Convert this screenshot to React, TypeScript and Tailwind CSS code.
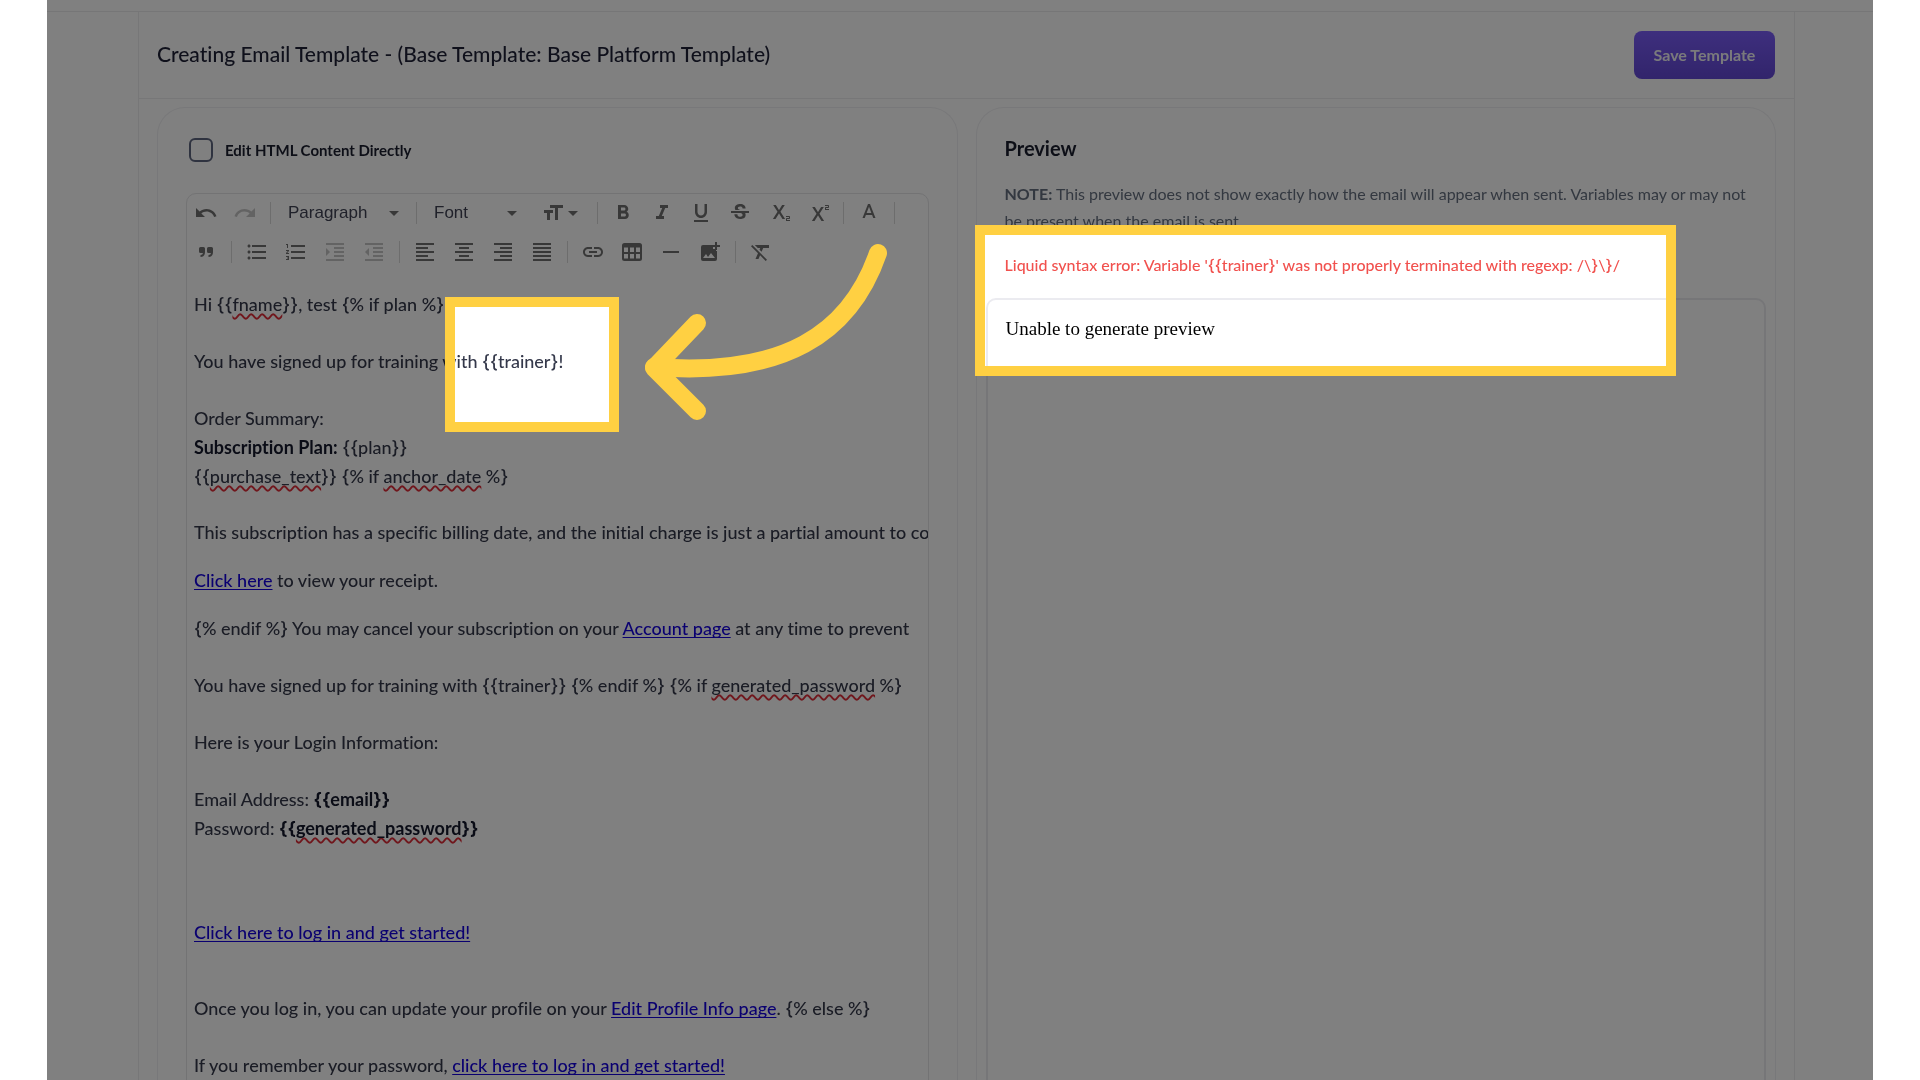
import type { ComponentType, ReactNode } from 'react';
import {
  MdUndo,
  MdRedo,
  MdArrowDropDown,
  MdFormatSize,
  MdFormatBold,
  MdFormatItalic,
  MdFormatUnderlined,
  MdStrikethroughS,
  MdSubscript,
  MdSuperscript,
  MdFormatListBulleted,
  MdFormatListNumbered,
  MdFormatIndentIncrease,
  MdFormatIndentDecrease,
  MdFormatAlignLeft,
  MdFormatAlignCenter,
  MdFormatAlignRight,
  MdFormatAlignJustify,
  MdLink,
  MdHorizontalRule,
  MdFormatClear,
} from 'react-icons/md';

type IconType = ComponentType<{ className?: string }>;

const TextColorIcon: IconType = ({ className }) => (
  <svg viewBox="0 0 24 24" fill="currentColor" className={className}>
    <path d="M11 3 5.5 17h2.25l1.12-3h6.25l1.12 3h2.25L13 3h-2zm-1.38 9L12 5.67 14.38 12H9.62z" />
  </svg>
);

const QuoteIcon: IconType = ({ className }) => (
  <svg viewBox="0 0 24 24" fill="currentColor" className={className}>
    <path d="M5 8.500A1.500 1.500 0 0 1 6.500 7h3A1.500 1.500 0 0 1 11 8.500V12c0 3-1.500 5-4.500 5v-2c1.500 0 2.300-.8 2.400-2H6.500A1.500 1.500 0 0 1 5 11.500z" />
    <path d="M13 8.500A1.500 1.500 0 0 1 14.500 7h3A1.500 1.500 0 0 1 19 8.500V12c0 3-1.500 5-4.500 5v-2c1.500 0 2.300-.8 2.400-2h-2.400a1.500 1.500 0 0 1-1.500-1.500z" />
  </svg>
);

const TableIcon: IconType = ({ className }) => (
  <svg viewBox="0 0 24 24" fill="currentColor" className={className}>
    <path
      fillRule="evenodd"
      d="M4.500 3h15A2.500 2.500 0 0 1 22 5.500v13a2.500 2.500 0 0 1-2.500 2.500h-15A2.500 2.500 0 0 1 2 18.500v-13A2.500 2.500 0 0 1 4.500 3zM4 7.500v4.500h4V7.500zm6 0v4.500h4V7.500zm6 0v4.500h4V7.500zM4 14v4.500h4V14zm6 0v4.500h4V14zm6 0v4.500h4V14z"
    />
  </svg>
);

const AddImageIcon: IconType = ({ className }) => (
  <svg viewBox="0 0 24 24" fill="currentColor" className={className}>
    <path d="M18 11V9h-3V5H5a2 2 0 0 0-2 2v12a2 2 0 0 0 2 2h12a2 2 0 0 0 2-2v-8zM5 18l3-4 2 3 3-4 4 5zM19 5V2h-2v3h-3v2h3v3h2V7h3V5z" />
  </svg>
);

function ToolButton({ icon: Icon, label, disabled }: { icon: IconType; label: string; disabled?: boolean }) {
  return (
    <button
      type="button"
      aria-label={label}
      disabled={disabled}
      className="flex h-[38px] w-[39px] shrink-0 items-center justify-center text-[#707070] disabled:text-[#c6c6c6]"
    >
      <Icon className="h-6 w-6" />
    </button>
  );
}

function Divider() {
  return (
    <span className="flex w-3 shrink-0 justify-center">
      <span className="h-[22px] w-px bg-[#dadada]" />
    </span>
  );
}

function ToolSelect({ label, value, className }: { label: string; value: string; className: string }) {
  return (
    <div className={`relative flex shrink-0 items-center ${className}`}>
      <select
        aria-label={label}
        className="h-[38px] w-full appearance-none bg-transparent pl-3 font-['Liberation_Sans',sans-serif] text-[17px] text-[#3f4254]"
      >
        <option>{value}</option>
      </select>
      <MdArrowDropDown className="pointer-events-none absolute right-1 h-6 w-6 text-[#707070]" />
    </div>
  );
}

function Liquid({ children }: { children: string }) {
  return (
    <>
      {children.split(/([{}]+)/).map((part, index) =>
        /[{}]/.test(part) ? (
          <span key={index} className="font-[Inter,sans-serif]">
            {part}
          </span>
        ) : (
          part
        )
      )}
    </>
  );
}

function Misspelled({ children }: { children: ReactNode }) {
  return (
    <span className="underline decoration-[#e02c38] decoration-wavy decoration-2 underline-offset-2 [text-decoration-skip-ink:none]">
      {children}
    </span>
  );
}

function EmailLink({ children }: { children: ReactNode }) {
  return (
    <a href="#" className="text-[#1400e0] underline underline-offset-2 [text-decoration-skip-ink:none]">
      {children}
    </a>
  );
}

function Toolbar() {
  return (
    <div className="-mt-px -ml-px">
      <div className="flex h-[39px] items-center">
        <ToolButton icon={MdUndo} label="Undo" />
        <ToolButton icon={MdRedo} label="Redo" disabled />
        <Divider />
        <ToolSelect label="Block format" value="Paragraph" className="w-[134px]" />
        <Divider />
        <ToolSelect label="Font family" value="Font" className="w-[106px]" />
        <button
          type="button"
          aria-label="Font size"
          className="flex h-[38px] w-[63px] shrink-0 items-center justify-center pl-1.5 text-[#707070]"
        >
          <MdFormatSize className="h-6 w-6" />
          <MdArrowDropDown className="-ml-1 h-6 w-6" />
        </button>
        <Divider />
        <ToolButton icon={MdFormatBold} label="Bold" />
        <ToolButton icon={MdFormatItalic} label="Italic" />
        <ToolButton icon={MdFormatUnderlined} label="Underline" />
        <ToolButton icon={MdStrikethroughS} label="Strikethrough" />
        <ToolButton icon={MdSubscript} label="Subscript" />
        <ToolButton icon={MdSuperscript} label="Superscript" />
        <Divider />
        <ToolButton icon={TextColorIcon} label="Text color" />
        <Divider />
      </div>
      <div className="flex h-[39px] items-center">
        <ToolButton icon={QuoteIcon} label="Quote" />
        <Divider />
        <ToolButton icon={MdFormatListBulleted} label="Bulleted list" />
        <ToolButton icon={MdFormatListNumbered} label="Numbered list" />
        <ToolButton icon={MdFormatIndentIncrease} label="Indent" disabled />
        <ToolButton icon={MdFormatIndentDecrease} label="Outdent" disabled />
        <Divider />
        <ToolButton icon={MdFormatAlignLeft} label="Align left" />
        <ToolButton icon={MdFormatAlignCenter} label="Align center" />
        <ToolButton icon={MdFormatAlignRight} label="Align right" />
        <ToolButton icon={MdFormatAlignJustify} label="Justify" />
        <Divider />
        <ToolButton icon={MdLink} label="Link" />
        <ToolButton icon={TableIcon} label="Table" />
        <ToolButton icon={MdHorizontalRule} label="Horizontal rule" />
        <ToolButton icon={AddImageIcon} label="Insert image" />
        <Divider />
        <ToolButton icon={MdFormatClear} label="Clear formatting" />
      </div>
    </div>
  );
}

function EmailBody() {
  return (
    <div className="overflow-hidden whitespace-nowrap pt-[19px] pl-[7px] text-[18px] leading-[29px] font-medium text-[#34384a]">
      <p className="mb-7">
        <Liquid>{'Hi {{'}</Liquid>
        <Misspelled>fname</Misspelled>
        <Liquid>{'}}, test {% if plan %}'}</Liquid>
      </p>
      <p className="mb-7">
        <Liquid>{'You have signed up for training with {{trainer}!'}</Liquid>
      </p>
      <p className="mb-[27px]">
        Order Summary:
        <br />
        <strong className="text-[#14182c]">Subscription Plan:</strong> <Liquid>{'{{plan}}'}</Liquid>
        <br />
        <Liquid>{'{{'}</Liquid>
        <Misspelled>purchase_text</Misspelled>
        <Liquid>{'}} {% if '}</Liquid>
        <Misspelled>anchor_date</Misspelled>
        <Liquid>{' %}'}</Liquid>
      </p>
      <p className="mb-[19px]">
        This subscription has a specific billing date, and the initial charge is just a partial amount to cover
      </p>
      <p className="mb-[19px]">
        <EmailLink>Click here</EmailLink> to view your receipt.
      </p>
      <p className="mb-7">
        <Liquid>{'{% endif %} You may cancel your subscription on your '}</Liquid>
        <EmailLink>Account page</EmailLink> at any time to prevent
      </p>
      <p className="mb-7">
        <Liquid>{'You have signed up for training with {{trainer}} {% endif %} {% if '}</Liquid>
        <Misspelled>generated_password</Misspelled>
        <Liquid>{' %}'}</Liquid>
      </p>
      <p className="mb-7">Here is your Login Information:</p>
      <p className="mb-[75px]">
        Email Address:{' '}
        <strong className="text-[#14182c]">
          <Liquid>{'{{email}}'}</Liquid>
        </strong>
        <br />
        Password:{' '}
        <strong className="text-[#14182c]">
          <Liquid>{'{{'}</Liquid>
          <Misspelled>generated_password</Misspelled>
          <Liquid>{'}}'}</Liquid>
        </strong>
      </p>
      <p className="mb-[47px]">
        <EmailLink>Click here to log in and get started!</EmailLink>
      </p>
      <p className="mb-7">
        Once you log in, you can update your profile on your <EmailLink>Edit Profile Info page</EmailLink>
        <Liquid>{'. {% else %}'}</Liquid>
      </p>
      <p className="mb-7">
        If you remember your password, <EmailLink>click here to log in and get started!</EmailLink>
      </p>
    </div>
  );
}

// Dims the page, leaves two spots lit and points at the broken variable
function TutorialOverlay() {
  return (
    <>
      <div className="pointer-events-none absolute inset-y-0 right-[47px] left-[47px] bg-[#808080] mix-blend-multiply">
        <div className="absolute top-[297px] left-[398px] h-[135px] w-[174px] bg-white" />
        <div className="absolute top-[225px] left-[928px] h-[151px] w-[701px] bg-white" />
      </div>
      <div className="pointer-events-none absolute top-[297px] left-[445px] h-[135px] w-[174px] border-10 border-[#ffd042]" />
      <div className="pointer-events-none absolute top-[225px] left-[975px] h-[151px] w-[701px] border-10 border-[#ffd042]" />
      <svg
        viewBox="640 240 252 184"
        className="pointer-events-none absolute top-[240px] left-[640px] h-[184px] w-[252px]"
        fill="none"
        stroke="#ffd042"
        strokeWidth="18"
        strokeLinecap="round"
        strokeLinejoin="round"
      >
        <path d="M878 253C850 334 784 377 654 367" />
        <path d="M697 323 654 368 697 411" />
      </svg>
    </>
  );
}

export default function App() {
  return (
    <div className="relative isolate h-screen overflow-hidden bg-white px-[47px] font-[Lato,sans-serif] [font-variant-ligatures:none]">
      <div className="flex h-full flex-col">
        <div className="h-3 shrink-0 border-b border-[#ececee]" />
        <main className="mr-[78px] ml-[91px] flex grow flex-col border-x border-[#ededf0]">
          <header className="flex h-[87px] shrink-0 items-center justify-between border-b border-[#ededf0] pr-[19px] pl-[18px]">
            <h1 className="pb-0.5 text-[21px] font-medium text-[#1e2036]">
              Creating Email Template - (Base Template: Base Platform Template)
            </h1>
            <button
              type="button"
              className="h-12 w-[141px] rounded-lg bg-linear-to-b from-[#7b5dfb] to-[#6348d6] text-[16px] font-bold text-[#f4f4f8]"
            >
              Save Template
            </button>
          </header>

          <div className="grid grow grid-cols-2 gap-[18px] px-[18px] pt-2">
            <section className="rounded-t-[28px] border border-b-0 border-[#f0f0f3] px-7">
              <label className="mt-[30px] flex h-6 items-center gap-3 text-[15px] font-bold text-[#1a1d2e]">
                <input
                  type="checkbox"
                  className="ml-[3px] h-6 w-6 appearance-none rounded-md border-2 border-[#5e6680] bg-white"
                />
                Edit HTML Content Directly
              </label>
              <div className="mt-[31px] h-full rounded-t-[10px] border border-[#e5e5e8]">
                <Toolbar />
                <EmailBody />
              </div>
            </section>

            <section className="rounded-t-[28px] border border-b-0 border-[#f0f0f3] px-[9px]">
              <div className="px-[19px]">
                <h2 className="mt-[26px] text-[20px] leading-7 font-bold text-[#1a1d2e]">Preview</h2>
                <p className="mt-[18px] text-[16px] leading-[27px] text-[#667080]">
                  <strong>NOTE:</strong> This preview does not show exactly how the email will appear when sent.
                  Variables may or may not be present when the email is sent.
                </p>
                <p className="mt-[17px] text-[16px] leading-[27px] font-medium text-[#f1514e]">
                  <Liquid>
                    {"Liquid syntax error: Variable '{{trainer}' was not properly terminated with regexp: /\\}\\}/"}
                  </Liquid>
                </p>
              </div>
              <div className="mt-[19px] h-full rounded-t-[10px] border-2 border-b-0 border-[#ebebf0] px-[18px] pt-[15px] font-['Liberation_Serif',serif] text-[19px] text-black">
                Unable to generate preview
              </div>
            </section>
          </div>
        </main>
      </div>
      <TutorialOverlay />
    </div>
  );
}
